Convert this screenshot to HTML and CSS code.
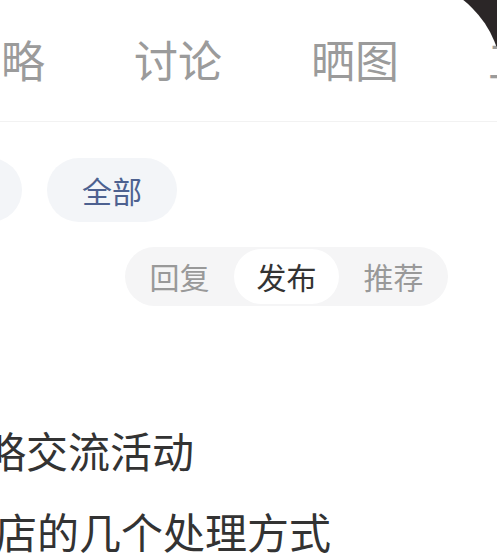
FILE: index.html
```html
<!DOCTYPE html>
<html lang="zh-CN">
<head>
  <meta charset="UTF-8" />
  <meta name="viewport" content="width=device-width, initial-scale=1.0"/>
  <title>社区</title>
  <link rel="stylesheet" href="styles.css">
</head>
<body>
  <div class="screen">
    <div class="tabs">
      <div class="tab">攻略</div>
      <div class="tab">讨论</div>
      <div class="tab">晒图</div>
      <div class="tab">工具</div>
    </div>

    <div class="chips">
      <div class="chip">最新</div>
      <div class="chip">全部</div>
    </div>

    <div class="seg-row">
      <div class="seg">
        <div class="seg-item">回复</div>
        <div class="seg-item active">发布</div>
        <div class="seg-item">推荐</div>
      </div>
    </div>

    <div class="posts">
      <div class="post first">攻略交流活动</div>
      <div class="post second">网店的几个处理方式</div>
    </div>
  </div>
</body>
</html>
```

FILE: styles.css
```css
* {
  box-sizing: border-box;
}

body {
  margin: 0;
  background-color: #2b2627;
  font-family: "Noto Sans CJK SC", "Noto Sans", sans-serif;
  overflow: hidden;
}

.screen {
  margin: -22px -5px 0 0;
  padding-top: 22px;
  height: 580px;
  background-color: #ffffff;
  border-top-right-radius: 102px;
  overflow: hidden;
}

.tabs {
  display: flex;
  gap: 89px;
  margin-left: -43px;
  padding: 37px 0 40px;
  border-bottom: 1px solid #f2f2f2;
  font-size: 44px;
  line-height: 44px;
  color: #9b9b9b;
  white-space: nowrap;
}

.tab {
  flex: none;
}

.chips {
  display: flex;
  gap: 25px;
  margin-left: -108px;
  padding-top: 36px;
}

.chip {
  flex: none;
  padding: 17px 35px;
  font-size: 30px;
  line-height: 30px;
  color: #4d6190;
  background-color: #f3f5f8;
  border-radius: 32px;
}

.seg-row {
  display: flex;
  justify-content: flex-end;
  padding-right: 54px;
  margin-top: 25px;
}

.seg {
  display: flex;
  gap: 2px;
  padding: 2px;
  background-color: #f5f5f6;
  border-radius: 30px;
}

.seg-item {
  width: 105px;
  height: 55px;
  font-size: 30px;
  line-height: 55px;
  text-align: center;
  color: #999999;
  border-radius: 28px;
}

.seg-item.active {
  background-color: #ffffff;
  color: #333333;
}

.posts {
  margin-top: 103px;
  font-size: 42px;
  line-height: 81px;
  color: #333333;
  white-space: nowrap;
}

.post.first {
  margin-left: -58px;
}

.post.second {
  margin-left: -47px;
}
```
